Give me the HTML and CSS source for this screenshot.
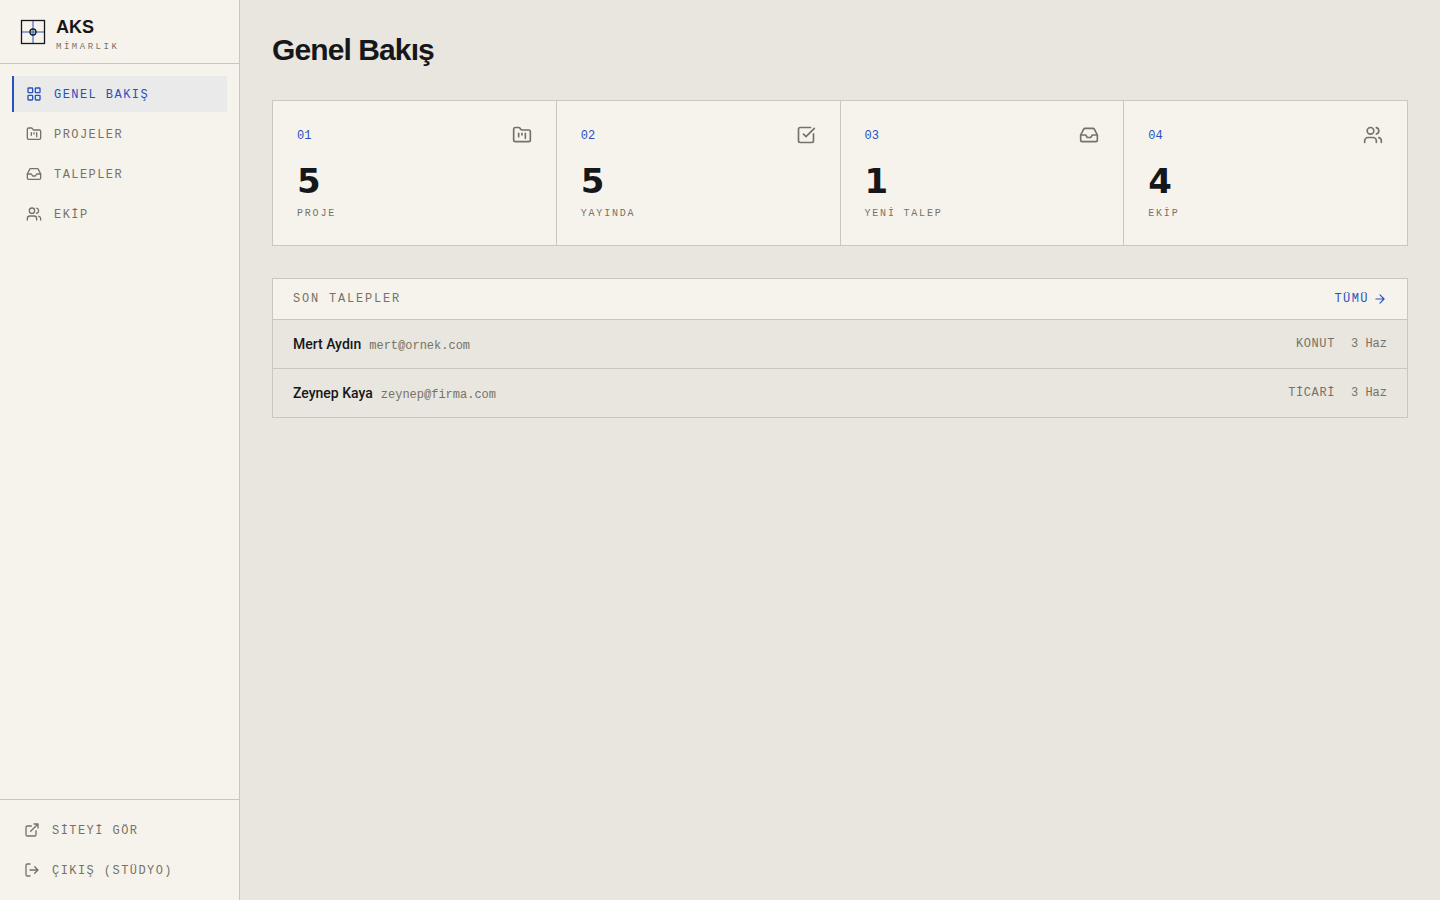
FILE: index.html
```html
<!DOCTYPE html>
<html lang="tr">
<head>
<meta charset="utf-8">
<meta name="viewport" content="width=device-width, initial-scale=1">
<title>AKS Mimarlık – Genel Bakış</title>
<link rel="stylesheet" href="styles.css">
</head>
<body>
<svg class="sprite" aria-hidden="true">
  <symbol id="grid" viewBox="0 0 24 24"><rect x="3" y="3" width="7" height="7" rx="1"/><rect x="14" y="3" width="7" height="7" rx="1"/><rect x="14" y="14" width="7" height="7" rx="1"/><rect x="3" y="14" width="7" height="7" rx="1"/></symbol>
  <symbol id="folder" viewBox="0 0 24 24"><path d="M4 20h16a2 2 0 0 0 2-2V8a2 2 0 0 0-2-2h-7.93a2 2 0 0 1-1.66-.9l-.82-1.2A2 2 0 0 0 7.93 3H4a2 2 0 0 0-2 2v13c0 1.1.9 2 2 2Z"/><path d="M8 10v4M12 10v2M16 10v6"/></symbol>
  <symbol id="inbox" viewBox="0 0 24 24"><path d="M22 12h-6l-2 3h-4l-2-3H2"/><path d="M5.45 5.11 2 12v6a2 2 0 0 0 2 2h16a2 2 0 0 0 2-2v-6l-3.45-6.89A2 2 0 0 0 16.76 4H7.24a2 2 0 0 0-1.79 1.11z"/></symbol>
  <symbol id="users" viewBox="0 0 24 24"><path d="M16 21v-2a4 4 0 0 0-4-4H6a4 4 0 0 0-4 4v2"/><circle cx="9" cy="7" r="4"/><path d="M22 21v-2a4 4 0 0 0-3-3.87M16 3.13a4 4 0 0 1 0 7.75"/></symbol>
  <symbol id="check" viewBox="0 0 24 24"><path d="M21 10.5V19a2 2 0 0 1-2 2H5a2 2 0 0 1-2-2V5a2 2 0 0 1 2-2h12.5"/><path d="m9 11 3 3L22 4"/></symbol>
  <symbol id="external" viewBox="0 0 24 24"><path d="M15 3h6v6M10 14 21 3M18 13v6a2 2 0 0 1-2 2H5a2 2 0 0 1-2-2V8a2 2 0 0 1 2-2h6"/></symbol>
  <symbol id="logout" viewBox="0 0 24 24"><path d="M9 21H5a2 2 0 0 1-2-2V5a2 2 0 0 1 2-2h4M16 17l5-5-5-5M21 12H9"/></symbol>
  <symbol id="arrow" viewBox="0 0 24 24"><path d="M5 12h14M12 5l7 7-7 7"/></symbol>
</svg>
<div class="app">
  <aside class="sidebar">
    <div class="brand">
      <svg class="logo" viewBox="0 0 26 26" fill="none" aria-hidden="true">
        <path class="logo-axis" d="M13 1.5v23M1.5 13h23"/>
        <rect class="logo-line" x="1.5" y="1.5" width="23" height="23"/>
        <circle class="logo-line" cx="13" cy="13" r="3"/>
      </svg>
      <div class="brand-text">
        <div class="brand-name">AKS</div>
        <div class="brand-sub">MİMARLIK</div>
      </div>
    </div>
    <nav class="nav">
      <a class="item active" href="#" aria-current="page"><svg class="icon"><use href="#grid"/></svg><span class="item-text">GENEL BAKIŞ</span></a>
      <a class="item" href="#"><svg class="icon"><use href="#folder"/></svg><span class="item-text">PROJELER</span></a>
      <a class="item" href="#"><svg class="icon"><use href="#inbox"/></svg><span class="item-text">TALEPLER</span></a>
      <a class="item" href="#"><svg class="icon"><use href="#users"/></svg><span class="item-text">EKİP</span></a>
    </nav>
    <div class="foot">
      <a class="item" href="#"><svg class="icon"><use href="#external"/></svg><span class="item-text">SİTEYİ GÖR</span></a>
      <button class="item" type="button"><svg class="icon"><use href="#logout"/></svg><span class="item-text">ÇIKIŞ (STÜDYO)</span></button>
    </div>
  </aside>
  <main class="main">
    <h1 class="title">Genel Bakış</h1>
    <section class="stats">
      <a class="card" href="#"><span class="card-top"><span class="card-no">01</span><svg class="icon"><use href="#folder"/></svg></span><span class="value">5</span><span class="label">PROJE</span></a>
      <a class="card" href="#"><span class="card-top"><span class="card-no">02</span><svg class="icon"><use href="#check"/></svg></span><span class="value">5</span><span class="label">YAYINDA</span></a>
      <a class="card" href="#"><span class="card-top"><span class="card-no">03</span><svg class="icon"><use href="#inbox"/></svg></span><span class="value">1</span><span class="label">YENİ TALEP</span></a>
      <a class="card" href="#"><span class="card-top"><span class="card-no">04</span><svg class="icon"><use href="#users"/></svg></span><span class="value">4</span><span class="label">EKİP</span></a>
    </section>
    <section class="panel">
      <div class="panel-head">
        <h2 class="panel-title">SON TALEPLER</h2>
        <a class="all" href="#">TÜMÜ<svg class="icon"><use href="#arrow"/></svg></a>
      </div>
      <ul class="rows">
        <li class="row"><span class="who"><span class="name">Mert Aydın</span><span>mert@ornek.com</span></span><span class="meta"><span class="kind">KONUT</span><span>3 Haz</span></span></li>
        <li class="row"><span class="who"><span class="name">Zeynep Kaya</span><span>zeynep@firma.com</span></span><span class="meta"><span class="kind">TİCARİ</span><span>3 Haz</span></span></li>
      </ul>
    </section>
  </main>
</div>
</body>
</html>
```
FILE: styles.css
```css
:root {
  --paper: #f6f3ec;
  --ground: #e8e6de;
  --line: #c9c6be;
  --ink: #16171a;
  --muted: #767267;
  --blue: #2850c0;
  --mono: "Liberation Mono", monospace;
  --sans: "Liberation Sans", sans-serif;
}
* { box-sizing: border-box; }
body {
  margin: 0;
  background: var(--ground);
  color: var(--ink);
  font-family: var(--mono);
  font-size: 12px;
  line-height: 16px;
}
a { color: inherit; text-decoration: none; }
.sprite { display: none; }
.icon {
  flex: none;
  width: 16px;
  height: 16px;
  fill: none;
  stroke: currentColor;
  stroke-width: 2;
  stroke-linecap: round;
  stroke-linejoin: round;
}
.app { display: flex; min-height: 100vh; }

.sidebar {
  display: flex;
  flex-direction: column;
  flex: none;
  width: 240px;
  background: var(--paper);
  border-right: 1px solid var(--line);
}
.brand {
  display: flex;
  align-items: center;
  gap: 10px;
  height: 64px;
  padding: 0 20px;
  border-bottom: 1px solid var(--line);
}
.logo { width: 26px; height: 26px; }
.logo-line { stroke: var(--ink); stroke-width: 1.3; }
.logo-axis { stroke: var(--blue); stroke-width: 1; }
.brand-text { padding-top: 6px; }
.brand-name {
  font-family: var(--sans);
  font-size: 18px;
  font-weight: 700;
  line-height: 24px;
}
.brand-sub {
  color: var(--muted);
  font-size: 9px;
  line-height: 16px;
  letter-spacing: 0.28em;
}
.nav, .foot {
  display: flex;
  flex-direction: column;
  gap: 4px;
  padding: 12px;
}
.nav { flex: 1; }
.foot { border-top: 1px solid var(--line); }
.item {
  display: flex;
  align-items: center;
  gap: 12px;
  height: 36px;
  padding: 0 12px;
  border: 0;
  background: none;
  color: var(--muted);
  font: inherit;
  letter-spacing: 0.12em;
  text-align: left;
  cursor: pointer;
}
.item-text { padding-top: 2px; }
.nav .item { border-left: 2px solid transparent; }
.nav .item.active {
  border-left-color: var(--blue);
  background: #eaeaea;
  color: var(--blue);
}

.main {
  display: flex;
  flex: 1;
  flex-direction: column;
  gap: 32px;
  min-width: 0;
  padding: 32px;
}
.title {
  margin: 0;
  font-family: var(--sans);
  font-size: 30px;
  font-weight: 700;
  line-height: 36px;
  letter-spacing: -0.03em;
}
.stats {
  display: grid;
  grid-template-columns: repeat(4, 1fr);
  gap: 1px;
  border: 1px solid var(--line);
  background: var(--line);
}
.card {
  display: flex;
  flex-direction: column;
  padding: 24px;
  background: var(--paper);
}
.card-top {
  display: flex;
  align-items: center;
  justify-content: space-between;
  color: var(--muted);
}
.card-top .icon { width: 20px; height: 20px; }
.card-no { padding-top: 2px; color: var(--blue); }
.value {
  margin-top: 16px;
  font-family: "DejaVu Sans", sans-serif;
  font-size: 34px;
  font-weight: 700;
  line-height: 40px;
}
.label {
  margin-top: 6px;
  color: var(--muted);
  font-size: 10px;
  line-height: 14px;
  letter-spacing: 0.18em;
}

.panel { border: 1px solid var(--line); }
.panel-head, .row {
  display: flex;
  align-items: center;
  justify-content: space-between;
  padding: 0 20px;
}
.panel-head { height: 40px; background: var(--paper); }
.panel-title {
  margin: 0;
  color: var(--muted);
  font-size: 12px;
  font-weight: 400;
  letter-spacing: 0.15em;
}
.all {
  display: flex;
  align-items: center;
  gap: 4px;
  color: var(--blue);
  letter-spacing: 0.12em;
}
.all .icon { width: 14px; height: 14px; }
.rows { margin: 0; padding: 0; list-style: none; }
.row {
  height: 49px;
  border-top: 1px solid var(--line);
  color: var(--muted);
}
.who { display: flex; align-items: baseline; gap: 8px; padding-top: 2px; }
.name {
  color: var(--ink);
  font-family: Roboto, sans-serif;
  font-size: 14px;
  font-weight: 500;
}
.meta { display: flex; gap: 16px; }
.kind { letter-spacing: 0.05em; }
```
